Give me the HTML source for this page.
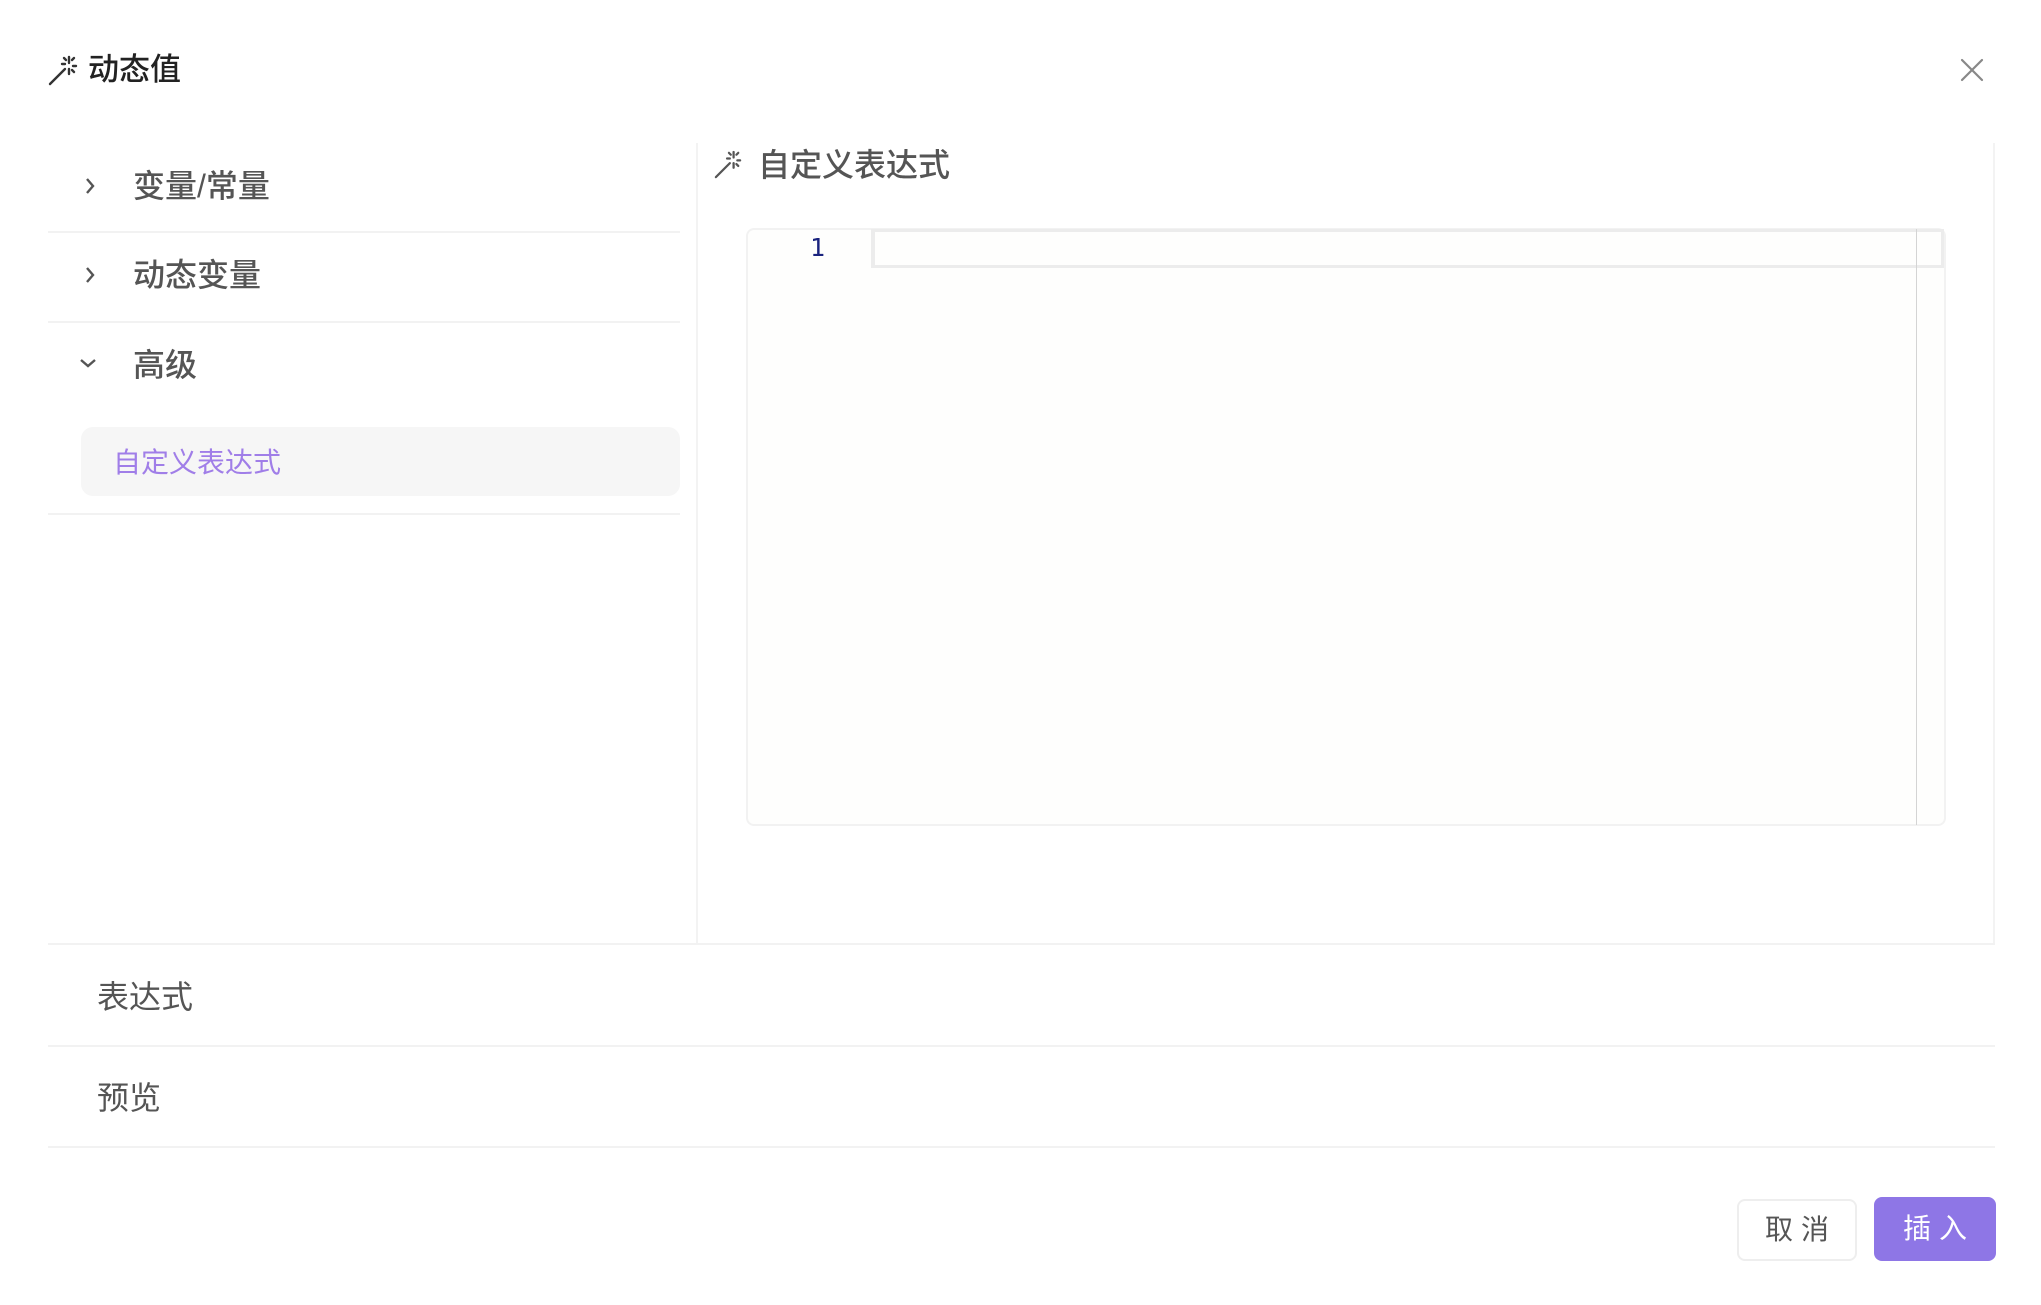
<!DOCTYPE html>
<html><head><meta charset="utf-8">
<style>
*{margin:0;padding:0;box-sizing:border-box}
html,body{width:2041px;height:1305px;background:#fff;overflow:hidden;font-family:"Liberation Sans","Noto Sans CJK SC",sans-serif;}
.a{position:absolute}
.t{white-space:nowrap;line-height:1}
.hl{position:absolute;height:2px;background:#f2f2f2}
</style></head><body>
<svg class="a" style="left:48px;top:55px" width="30" height="32" viewBox="0 0 30 32" fill="none" stroke="#333" stroke-width="2.4" stroke-linecap="round">
<line x1="2" y1="29" x2="17" y2="14"/>
<line x1="21" y1="2" x2="21" y2="8"/><line x1="21" y1="14" x2="21" y2="19"/>
<line x1="14" y1="9" x2="17" y2="9"/><line x1="25" y1="11" x2="28" y2="11"/>
<line x1="16" y1="3" x2="18" y2="5"/><line x1="26" y1="3" x2="24" y2="5"/>
<line x1="24" y1="15" x2="26" y2="17"/>
</svg>
<div class="a t" style="left:88px;top:54px;font-size:31px;color:#222;font-weight:500">动态值</div>
<svg class="a" style="left:1960px;top:58px" width="24" height="24" viewBox="0 0 24 24" stroke="#888" stroke-width="2.2" stroke-linecap="round"><line x1="2" y1="2" x2="22" y2="22"/><line x1="22" y1="2" x2="2" y2="22"/></svg>

<svg class="a" style="left:83px;top:176px" width="14" height="20" viewBox="0 0 14 20" fill="none" stroke="#555" stroke-width="2.4"><polyline points="4,3 10,10 4,17"/></svg>
<div class="a t" style="left:133px;top:170px;font-size:32px;color:#555;font-weight:500">变量/常量</div>
<div class="hl" style="left:48px;top:231px;width:632px"></div>
<svg class="a" style="left:83px;top:265px" width="14" height="20" viewBox="0 0 14 20" fill="none" stroke="#555" stroke-width="2.4"><polyline points="4,3 10,10 4,17"/></svg>
<div class="a t" style="left:133px;top:259px;font-size:32px;color:#555;font-weight:500">动态变量</div>
<div class="hl" style="left:48px;top:321px;width:632px"></div>
<svg class="a" style="left:78px;top:356px" width="20" height="14" viewBox="0 0 20 14" fill="none" stroke="#555" stroke-width="2.4"><polyline points="3,4 10,10 17,4"/></svg>
<div class="a t" style="left:133px;top:349px;font-size:32px;color:#555;font-weight:500">高级</div>
<div class="a" style="left:81px;top:427px;width:599px;height:69px;background:#f6f6f6;border-radius:12px"></div>
<div class="a t" style="left:113px;top:449px;font-size:28px;color:#a07ee8">自定义表达式</div>
<div class="hl" style="left:48px;top:513px;width:632px"></div>

<div class="a" style="left:696px;top:143px;width:2px;height:802px;background:#f3f3f3"></div>
<div class="a" style="left:1993px;top:143px;width:2px;height:802px;background:#f3f3f3"></div>

<svg class="a" style="left:714px;top:150px" width="28" height="30" viewBox="0 0 30 32" fill="none" stroke="#555" stroke-width="2.4" stroke-linecap="round">
<line x1="2" y1="29" x2="17" y2="14"/>
<line x1="21" y1="2" x2="21" y2="8"/><line x1="21" y1="14" x2="21" y2="19"/>
<line x1="14" y1="9" x2="17" y2="9"/><line x1="25" y1="11" x2="28" y2="11"/>
<line x1="16" y1="3" x2="18" y2="5"/><line x1="26" y1="3" x2="24" y2="5"/>
<line x1="24" y1="15" x2="26" y2="17"/>
</svg>
<div class="a t" style="left:758px;top:149px;font-size:32px;color:#555;font-weight:500">自定义表达式</div>

<div class="a" style="left:746px;top:228px;width:1200px;height:598px;border:2px solid #f2f2f2;border-radius:8px;background:#fefefd"></div>
<div class="a t" style="left:810px;top:235px;font-size:25px;color:#1a237e;font-family:'DejaVu Sans Mono','Liberation Mono',monospace">1</div>
<div class="a" style="left:871px;top:229px;width:1073px;height:39px;border:3px solid #ececec;border-left-width:4px"></div>
<div class="a" style="left:1916px;top:229px;width:1px;height:596px;background:#d4d4d4"></div>

<div class="hl" style="left:48px;top:943px;width:1947px"></div>
<div class="a t" style="left:97px;top:981px;font-size:32px;color:#555">表达式</div>
<div class="hl" style="left:48px;top:1045px;width:1947px"></div>
<div class="a t" style="left:97px;top:1082px;font-size:32px;color:#555">预览</div>
<div class="hl" style="left:48px;top:1146px;width:1947px"></div>

<div class="a t" style="left:1737px;top:1199px;width:120px;height:62px;border:2px solid #eee;border-radius:8px;font-size:28px;color:#555;display:flex;align-items:center;justify-content:center;letter-spacing:8px;padding-left:8px">取消</div>
<div class="a t" style="left:1874px;top:1197px;width:122px;height:64px;background:#8e76e6;border-radius:8px;font-size:28px;color:#fff;display:flex;align-items:center;justify-content:center;letter-spacing:8px;padding-left:8px">插入</div>
</body></html>
